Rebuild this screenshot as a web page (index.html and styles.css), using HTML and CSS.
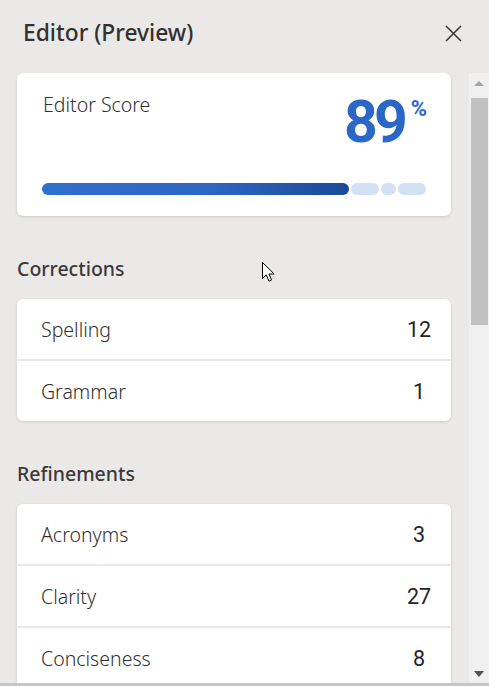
FILE: index.html
```html
<!DOCTYPE html>
<html lang="en">
<head>
<meta charset="utf-8">
<title>Editor (Preview)</title>
<link rel="stylesheet" href="styles.css">
</head>
<body>
<div class="pane">
  <header class="pane-header">
    <h1 class="pane-title">Editor (Preview)</h1>
    <button class="close-btn" aria-label="Close">
      <svg width="17" height="17" viewBox="0 0 17 17"><path d="M1 1 L16 16 M16 1 L1 16" stroke="#3b3a39" stroke-width="1.6" fill="none"/></svg>
    </button>
  </header>
  <div class="pane-body">
    <main class="content">
      <section class="card score-card">
        <div class="score-top">
          <span class="score-label">Editor Score</span>
          <span class="score-value">89<sup class="score-pct">%</sup></span>
        </div>
        <div class="score-bar">
          <span class="seg seg-fill"></span>
          <span class="seg seg-a"></span>
          <span class="seg seg-b"></span>
          <span class="seg seg-c"></span>
        </div>
      </section>

      <h2 class="section-title">Corrections</h2>
      <section class="card list-card">
        <div class="row"><span class="row-label">Spelling</span><span class="row-count">12</span></div>
        <div class="row"><span class="row-label">Grammar</span><span class="row-count">1</span></div>
      </section>

      <h2 class="section-title">Refinements</h2>
      <section class="card list-card">
        <div class="row"><span class="row-label">Acronyms</span><span class="row-count">3</span></div>
        <div class="row"><span class="row-label">Clarity</span><span class="row-count">27</span></div>
        <div class="row"><span class="row-label">Conciseness</span><span class="row-count">8</span></div>
      </section>
    </main>
    <div class="scrollbar">
      <span class="sb-arrow sb-up"></span>
      <span class="sb-thumb"></span>
      <span class="sb-fill"></span>
      <span class="sb-arrow sb-down"></span>
    </div>
  </div>
  <div class="window-edge"></div>
  <svg class="cursor" width="14" height="22" viewBox="0 0 14 22"><path d="M0.5 0.5 L0.5 16.5 L4.3 12.9 L7 19.2 L9.6 18.1 L7 12 L12.2 12 Z" fill="#fff" stroke="#000" stroke-width="1" stroke-linejoin="miter"/></svg>
</div>
</body>
</html>
```

FILE: styles.css
```css
* { box-sizing: border-box; }
html, body { margin: 0; padding: 0; }
body {
  background: #ebe9e7;
  font-family: "Noto Sans", "Open Sans", sans-serif;
  color: #323130;
  width: 489px;
  height: 686px;
  overflow: hidden;
}
.pane {
  position: relative;
  height: 686px;
  display: flex;
  flex-direction: column;
}
.pane-header {
  height: 73px;
  display: flex;
  align-items: flex-start;
  justify-content: space-between;
  padding: 16px 27px 0 23px;
}
.pane-title {
  margin: 0;
  font-size: 22.8px;
  font-weight: 500;
  line-height: 34px;
  color: #323130;
  letter-spacing: 0;
}
.close-btn {
  background: none;
  border: 0;
  padding: 0;
  margin-top: 9px;
  width: 17px;
  height: 17px;
  display: flex;
}
.pane-body {
  flex: 1;
  display: flex;
  min-height: 0;
}
.content {
  width: 469px;
  padding: 0 18px 0 17px;
  overflow: hidden;
}
.card {
  background: #fff;
  border-radius: 6px;
  box-shadow: 0 1px 3px rgba(0,0,0,0.12), 0 0 1px rgba(0,0,0,0.08);
}
.score-card {
  height: 143px;
  padding: 18px 25px 21px 25px;
  display: flex;
  flex-direction: column;
  justify-content: space-between;
}
.score-top {
  display: flex;
  justify-content: space-between;
  align-items: flex-start;
}
.score-label {
  font-size: 19.5px;
  font-weight: 350;
  line-height: 28px;
  padding-left: 1px;
  color: #323130;
}
.score-value {
  font-family: Roboto, "Noto Sans", sans-serif;
  font-weight: 700;
  font-size: 59px;
  line-height: 60px;
  color: #2b67c7;
  letter-spacing: -4px;
  display: flex;
  align-items: flex-start;
  margin-top: 1px;
}
.score-pct {
  font-size: 22px;
  line-height: 21px;
  letter-spacing: 0;
  margin-left: 7px;
  margin-right: -1px;
  margin-top: 6px;
  vertical-align: baseline;
}
.score-bar {
  display: flex;
  gap: 2px;
  height: 12px;
}
.seg {
  height: 12px;
  border-radius: 6px;
  background: #d2e1f3;
}
.seg-fill {
  width: 307px;
  background: linear-gradient(100deg, #2f6fcd 0%, #2c66c3 55%, #1a4a98 100%);
}
.seg-a { width: 28px; }
.seg-b { width: 15px; }
.seg-c { width: 28px; }

.section-title {
  margin: 40px 0 18px 0;
  font-size: 19.5px;
  font-weight: 500;
  line-height: 25px;
  color: #3b3a39;
  letter-spacing: 0;
}
.list-card {
  display: flex;
  flex-direction: column;
  gap: 2px;
  background: #ebe9e7;
}
.row {
  height: 60px;
  background: #fff;
  display: flex;
  align-items: center;
  justify-content: space-between;
  padding: 0 19px 0 24px;
}
.row:first-child { border-radius: 6px 6px 0 0; }
.row:last-child { border-radius: 0 0 6px 6px; }
.row-label {
  font-size: 19.5px;
  font-weight: 350;
  color: #323130;
}
.row-count {
  font-family: Roboto, "Noto Sans", sans-serif;
  font-size: 21.5px;
  font-weight: 400;
  color: #252423;
  min-width: 26px;
  text-align: center;
}

.scrollbar {
  width: 20px;
  background: #f0f0f0;
  display: flex;
  flex-direction: column;
  align-items: center;
}
.sb-arrow {
  width: 0;
  height: 0;
  border-left: 5px solid transparent;
  border-right: 5px solid transparent;
}
.sb-up {
  border-bottom: 5px solid #a3a3a3;
  margin-top: 8px;
  margin-bottom: 12px;
}
.sb-thumb {
  width: 17px;
  height: 227px;
  background: #c1c1c1;
}
.sb-fill { flex: 1; }
.sb-down {
  border-top: 6px solid #505050;
  margin-bottom: 6px;
}
.window-edge {
  height: 3px;
  background: #c6c6c6;
}
.cursor {
  position: absolute;
  left: 262px;
  top: 262px;
}
```
